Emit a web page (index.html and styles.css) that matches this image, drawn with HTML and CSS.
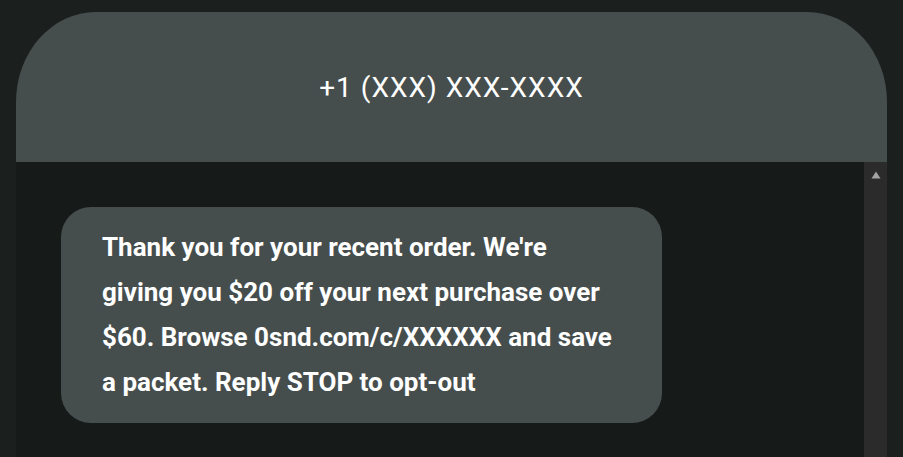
FILE: index.html
```html
<!DOCTYPE html>
<html>
<head>
<meta charset="utf-8">
<link rel="stylesheet" href="styles.css">
</head>
<body>
<div class="phone">
  <header class="header">
    <h1 class="title">+1 (XXX) XXX-XXXX</h1>
  </header>
  <main class="thread">
    <section class="messages">
      <div class="bubble">
        <p class="text">Thank you for your recent order. We're giving you $20 off your next purchase over $60. Browse 0snd.com/c/XXXXXX and save a packet. Reply STOP to opt-out</p>
      </div>
    </section>
    <div class="scrollbar">
      <svg class="arrow" width="10" height="8" viewBox="0 0 10 8"><path d="M5 0.5 L9.5 7.5 L0.5 7.5 Z" fill="#a3a3a3"/></svg>
    </div>
  </main>
</div>
</body>
</html>
```

FILE: styles.css
```css
html, body {
  margin: 0;
  padding: 0;
  height: 100%;
  overflow: hidden;
}
body {
  background: #1b1f1e;
  font-family: Roboto, "Liberation Sans", sans-serif;
}
.phone {
  margin: 12px 0 0 16px;
  width: 871px;
  height: calc(100% - 12px);
  display: flex;
  flex-direction: column;
}
.header {
  height: 150px;
  flex: none;
  background: #464e4d;
  border-radius: 80px 80px 0 0 / 90px 90px 0 0;
  display: flex;
  align-items: center;
  justify-content: center;
}
.title {
  margin: 0;
  color: #ffffff;
  font-size: 28px;
  letter-spacing: 1px;
  font-weight: 400;
}
.thread {
  flex: 1;
  background: #161a19;
  display: flex;
}
.messages {
  flex: 1;
  padding: 45px 0 0 45px;
}
.bubble {
  width: 601px;
  box-sizing: border-box;
  background: #464e4d;
  border-radius: 30px;
  padding: 18px 44px 18px 41px;
}
.text {
  margin: 0;
  color: #ffffff;
  font-size: 26px;
  font-weight: 700;
  line-height: 45px;
}
.scrollbar {
  width: 23px;
  background: #2b2b2b;
  display: flex;
  justify-content: center;
  padding-top: 9px;
  box-sizing: border-box;
}
.arrow {
  display: block;
}
```
